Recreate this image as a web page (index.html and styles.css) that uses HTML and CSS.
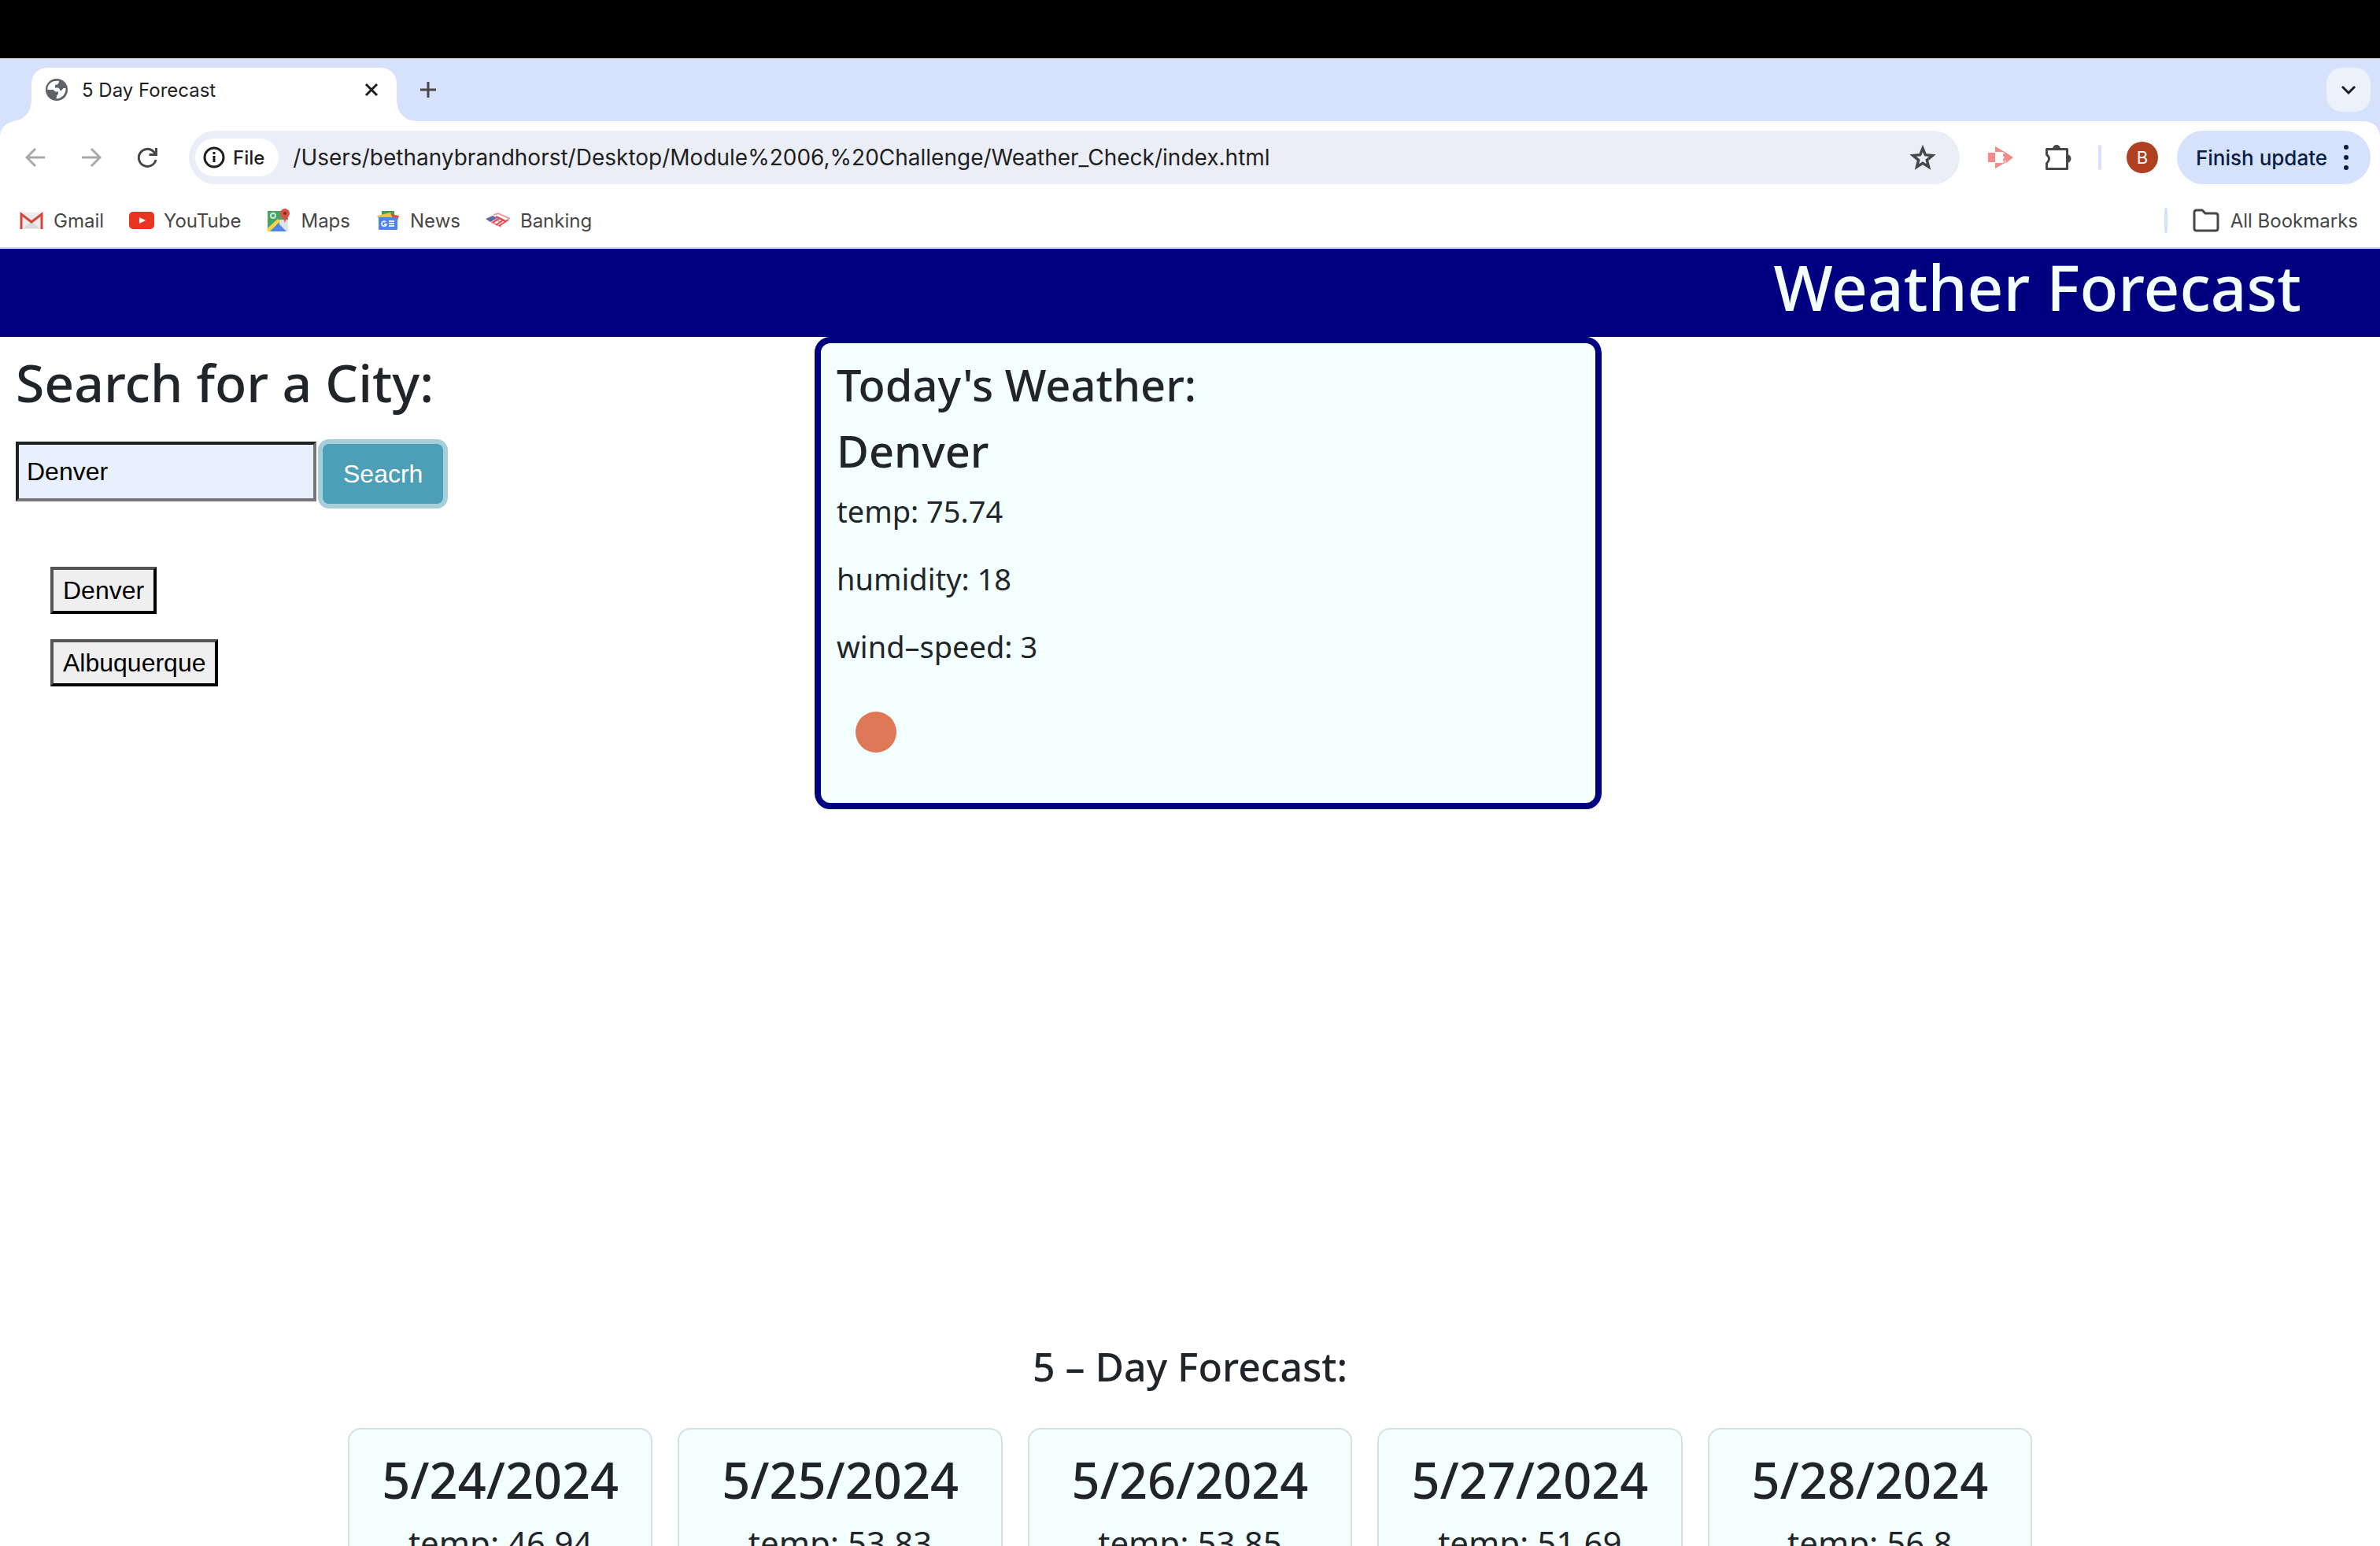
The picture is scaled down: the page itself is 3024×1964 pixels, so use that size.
FILE: index.html
```html
<!DOCTYPE html>
<html lang="en">
<head>
<meta charset="utf-8">
<title>5 Day Forecast</title>
<link rel="stylesheet" href="styles.css">
</head>
<body>
<div class="screen">
  <div class="menu-bar"></div>
  <div class="chrome">
  <div class="tab-strip">
    <div class="tab">
      <svg class="tab-icon" viewBox="0 0 28 28"><circle cx="14" cy="14" r="14" fill="#5f6368"/><path d="M2.500 14C2 7 8 2 17 3c0 3-1.500 4.500-5 5v3.500h3c2 0 3 1.500 3 3.500h2l2.500-3h3c.5 7-4.500 13-12 13.500l.5-3.500 2-3v-2.500H12.500L9.500 14z" fill="#fff"/></svg>
      <span class="tab-title">5 Day Forecast</span>
      <button class="icon-button" aria-label="Close tab"><svg width="18" height="18" viewBox="0 0 18 18"><path d="M2 2l14 14M16 2L2 16" stroke="#1f1f1f" stroke-width="3"/></svg></button>
    </div>
    <button class="icon-button new-tab" aria-label="New tab"><svg width="22" height="22" viewBox="0 0 22 22"><path d="M11 1v20M1 11h20" stroke="#474747" stroke-width="3"/></svg></button>
    <button class="tab-search" aria-label="Search tabs"><svg width="20" height="12" viewBox="0 0 20 12"><path d="M2 2l8 8 8-8" fill="none" stroke="#1f1f1f" stroke-width="3"/></svg></button>
  </div>
  <div class="toolbar">
    <div class="nav-buttons">
      <button class="icon-button" aria-label="Back"><svg width="26" height="26" viewBox="0 0 26 26"><path d="M25 13H3M13 2L2 13l11 11" fill="none" stroke="#a8a8a8" stroke-width="3"/></svg></button>
      <button class="icon-button" aria-label="Forward"><svg width="26" height="26" viewBox="0 0 26 26"><path d="M1 13h22M13 2l11 11-11 11" fill="none" stroke="#a8a8a8" stroke-width="3"/></svg></button>
      <button class="icon-button" aria-label="Reload"><svg width="26" height="26" viewBox="0 0 26 26"><path d="M24 16A11 11 0 1 1 21 5.500l3 3.500" fill="none" stroke="#474747" stroke-width="3"/><path d="M26 1v10H15.500V8H23V1z" fill="#474747"/></svg></button>
    </div>
    <div class="address">
      <div class="file-chip">
        <svg width="28" height="28" viewBox="0 0 28 28"><circle cx="14" cy="14" r="12" fill="none" stroke="#1f1f1f" stroke-width="3"/><path d="M14 12v8M14 7v3" stroke="#1f1f1f" stroke-width="3"/></svg>
        <span>File</span>
      </div>
      <input class="url" type="text" aria-label="Address" value="/Users/bethanybrandhorst/Desktop/Module%2006,%20Challenge/Weather_Check/index.html">
      <button class="icon-button" aria-label="Bookmark this page"><svg width="34" height="32" viewBox="0 0 34 32"><path d="M17 4.500l3.300 8.200 9 .8-7 5.800 2.200 8.700-7.500-4.700L9.500 28l2.200-8.700-7-5.800 9-.8z" fill="none" stroke="#474747" stroke-width="3.500"/></svg></button>
    </div>
    <div class="extensions">
      <button class="icon-button" aria-label="Screen recorder"><svg width="32" height="28" viewBox="0 0 32 28"><path d="M0 8h9v12H0zM9 0l14 8v3l-4-4H9zM9 28l14-8v-3l-4 4H9zM23 8l9 6-9 7-1-3-3 1v-3l2-2-2-2V9l3 1z" fill="#f28b87"/></svg></button>
      <button class="icon-button" aria-label="Extensions"><svg width="34" height="34" viewBox="0 0 34 34"><path d="M2.500 6.500h26v25h-26v-7q6-6 0-11z" fill="none" stroke="#474747" stroke-width="3" stroke-linejoin="round"/><path d="M10 6a5 5 0 0 1 10 0zM28 13a5 5 0 0 1 0 11z" fill="#474747"/></svg></button>
    </div>
    <div class="profile">
      <span class="divider"></span>
      <button class="avatar" aria-label="Profile">B</button>
    </div>
    <button class="update">Finish update
      <svg width="6" height="32" viewBox="0 0 6 32"><circle cx="3" cy="3" r="3" fill="#041e49"/><circle cx="3" cy="16" r="3" fill="#041e49"/><circle cx="3" cy="29" r="3" fill="#041e49"/></svg>
    </button>
  </div>
  <nav class="bookmarks">
    <a class="bookmark" href="#"><svg width="32" height="32" viewBox="0 0 32 32"><path d="M3 6h26v21H3z" fill="#ececec"/><path d="M6 26l10-9 10 9z" fill="#dadada"/><path d="M3 27V8l13 10L29 8v19" fill="none" stroke="#d2473a" stroke-width="3"/></svg>Gmail</a>
    <a class="bookmark" href="#"><svg width="32" height="32" viewBox="0 0 32 32"><rect y="5" width="32" height="22" rx="5" fill="#e93323"/><path d="M13 12l8 4-8 4z" fill="#fff"/></svg>YouTube</a>
    <a class="bookmark" href="#"><svg width="32" height="32" viewBox="0 0 32 32"><path d="M2 4h26v26H2z" fill="#4aa366"/><path d="M17 15h11v15H17z" fill="#dfe3e8"/><path d="M2 30v-4l13-12 3 3L5 30z" fill="#f8d548"/><path d="M5 30l11-10 10 10z" fill="#4f86ec"/><path d="M24 20c0-6-6-8-6-13a6 6 0 0 1 12 0c0 5-6 7-6 13z" fill="#dc5144"/><circle cx="24" cy="7" r="2" fill="#7c2a22"/><circle cx="9" cy="10" r="3" fill="none" stroke="#cfe8d6" stroke-width="2"/></svg>Maps</a>
    <a class="bookmark" href="#"><svg width="32" height="32" viewBox="0 0 32 32"><path d="M8 4h16v9H8z" fill="#459c5a"/><path d="M2 10l17-4 3 8H4z" fill="#f4be42"/><path d="M20 8l10 2-3 10-5-6z" fill="#d95140"/><rect x="4" y="12" width="24" height="16" rx="1" fill="#5086ec"/><path d="M13 18a3 3 0 1 0 1 3h-3M17 17h7M17 20h7M17 23h7" fill="none" stroke="#e4edff" stroke-width="2"/></svg>News</a>
    <a class="bookmark" href="#"><svg width="32" height="32" viewBox="0 0 32 32"><path d="M0 14l9-4 6 3-9 5z" fill="#5a6ba0"/><path d="M10 9l6-2 15 7M15 12l11 5M9 18l5-3 6 4M7 18l13 6" fill="none" stroke="#ee9ba0" stroke-width="2"/><path d="M13 11l12 6M9 19l9-6M13 22l10-7M17 23l12-8" fill="none" stroke="#dc4a50" stroke-width="2"/></svg>Banking</a>
    <span class="divider push"></span>
    <a class="bookmark all" href="#"><svg width="34" height="30" viewBox="0 0 34 30"><path d="M2 5q0-3 3-3h7l4 4h13q3 0 3 3v16q0 3-3 3H5q-3 0-3-3z" fill="none" stroke="#474747" stroke-width="3"/></svg>All Bookmarks</a>
  </nav>
  </div>
  <header class="site-header"><h1>Weather Forecast</h1></header>
  <main>
    <div class="top">
      <section class="search">
        <h2><label for="city">Search for a City:</label></h2>
        <form class="search-form">
          <input id="city" class="city-input" type="text" value="Denver">
          <button class="search-button" type="button">Seacrh</button>
        </form>
        <div class="history">
          <button class="city-button">Denver</button>
          <button class="city-button">Albuquerque</button>
        </div>
      </section>
      <section class="today">
        <h3>Today's Weather:</h3>
        <h3>Denver</h3>
        <p>temp: 75.74</p>
        <p>humidity: 18</p>
        <p>wind–speed: 3</p>
        <svg class="sun" viewBox="0 0 100 100"><circle cx="50" cy="50" r="26" fill="#de7856"/></svg>
      </section>
    </div>
    <section class="forecast">
      <h4>5 – Day Forecast:</h4>
      <div class="days">
        <article class="day"><h5>5/24/2024</h5><p>temp: 46.94</p></article>
        <article class="day"><h5>5/25/2024</h5><p>temp: 53.83</p></article>
        <article class="day"><h5>5/26/2024</h5><p>temp: 53.85</p></article>
        <article class="day"><h5>5/27/2024</h5><p>temp: 51.69</p></article>
        <article class="day"><h5>5/28/2024</h5><p>temp: 56.8</p></article>
      </div>
    </section>
  </main>
</div>
</body>
</html>
```
FILE: styles.css
```css
* { box-sizing: border-box; }
body { margin: 0; background: #fff; color: #212529; font-family: "Noto Sans", sans-serif; }
p { margin: 0; }
h1, h2, h3, h4, h5 { margin: 0; font-weight: 500; }
svg { display: block; flex: none; }
button { cursor: pointer; }
.screen { height: 100vh; overflow: hidden; }

/* Browser window */
.menu-bar { height: 74px; background: #000; }
.chrome { background: #d6e1fb; font-family: Inter, sans-serif; }
.tab-strip, .toolbar, .bookmarks { display: flex; align-items: center; }
.tab-strip { height: 80px; padding: 12px 12px 0 40px; align-items: stretch; }
.tab { position: relative; display: flex; align-items: center; width: 464px; padding: 0 23px 12px 18px; background: #fff; border-radius: 20px 20px 0 0; }
.tab::before, .tab::after { content: ""; position: absolute; bottom: 0; width: 24px; height: 24px; }
.tab::before { right: 100%; background: radial-gradient(circle at 0 0, #d6e1fb 23px, #fff 24px); }
.tab::after { left: 100%; background: radial-gradient(circle at 100% 0, #d6e1fb 23px, #fff 24px); }
.tab-icon { width: 28px; height: 28px; }
.tab-title { flex: 1; margin-left: 18px; font-size: 24px; color: #1f1f1f; }
.icon-button { display: flex; align-items: center; justify-content: center; padding: 0; border: 0; background: none; }
.new-tab { margin: 0 0 12px 29px; }
.tab-search { display: flex; align-items: center; justify-content: center; width: 56px; height: 56px; margin-left: auto; padding: 0; border: 0; border-radius: 20px; background: #ebf2fc; }
.toolbar { height: 92px; padding: 0 12px 0 32px; border-radius: 20px 20px 0 0; background: #fff; }
.nav-buttons { display: flex; gap: 45px; margin-right: 40px; }
.extensions { display: flex; align-items: center; gap: 40px; margin: 0 34px 0 36px; }
.profile { display: flex; align-items: center; gap: 32px; margin-right: 24px; }
.address { display: flex; flex: 1; align-items: center; height: 68px; padding: 0 30px 0 8px; border-radius: 34px; background: #ebeef7; }
.file-chip { display: flex; align-items: center; gap: 10px; height: 48px; padding: 0 18px 0 10px; border-radius: 24px; background: #fff; font-size: 24px; font-weight: 500; color: #1f1f1f; }
.url { flex: 1; min-width: 0; margin-left: 18px; padding: 0; border: 0; background: none; color: #1f1f1f; font: 28px Inter, sans-serif; }
.divider { width: 4px; height: 32px; border-radius: 2px; background: #d6e1fb; }
.avatar { width: 40px; height: 40px; padding: 0; border: 0; border-radius: 50%; background: #b0401f; color: #fff; font: 22px Inter, sans-serif; }
.update { display: flex; align-items: center; justify-content: space-between; width: 246px; height: 68px; padding: 0 28px 0 24px; border: 0; border-radius: 34px; background: #d6e1fb; color: #041e49; font: 500 26px Inter, sans-serif; white-space: nowrap; }
.bookmarks { height: 70px; padding: 0 28px 0 24px; gap: 32px; border-bottom: 2px solid #dcdcdc; background: #fff; }
.bookmark { display: flex; align-items: center; gap: 12px; color: #474747; font-size: 24px; text-decoration: none; }
.push { margin-left: auto; }
.bookmark.all { gap: 14px; }

/* Weather page */
.site-header { height: 112px; padding-right: 100px; background: #000080; color: #f3ffff; text-align: right; }
.site-header h1 { font-size: 80px; line-height: 96px; }
.top { display: grid; grid-template-columns: 1035fr 1000fr 989fr; height: 1278px; align-items: start; }
.search { padding: 20px; }
.search h2 { font-size: 66px; line-height: 74px; }
.search-form { display: flex; gap: 8px; margin-top: 39px; }
.city-input { width: 382px; height: 76px; padding: 0 10px; border: 4px inset #767676; background: #e8f0fe; color: #000; font: 32px "Liberation Sans", Arial, sans-serif; }
.search-button { height: 76px; margin-top: 3px; padding: 0 26px; border: 0; border-radius: 8px; background: #4c9fb6; box-shadow: 0 0 0 6px #a6cfda; color: #fff; font: 32px "Liberation Sans", Arial, sans-serif; }
.history { display: flex; flex-direction: column; align-items: flex-start; gap: 32px; margin: 80px 0 0 44px; }
.city-button { height: 60px; padding: 0 12px; border: 4px outset #000; background: #efefef; color: #000; font: 32px "Liberation Sans", Arial, sans-serif; }
.today { height: 600px; padding: 18px 20px; border: 8px solid #000080; border-radius: 20px; background: #f3ffff; }
.today h3 { font-size: 56px; line-height: 68px; margin-bottom: 16px; }
.today p { font-size: 38px; line-height: 54px; margin-bottom: 32px; }
.sun { width: 100px; height: 100px; }
.forecast h4 { font-size: 50px; line-height: 60px; text-align: center; }
.days { display: grid; grid-template-columns: 31fr 33fr 33fr 31fr 33fr; gap: 32px; max-width: 2140px; margin: 48px auto 0; }
.day { height: 420px; padding: 28px 0; border: 2px solid #d5e0e0; border-radius: 16px; background: #f3ffff; text-align: center; }
.day h5 { font-size: 63px; line-height: 72px; }
.day p { margin-top: 14px; font-size: 42px; line-height: 60px; }
```
